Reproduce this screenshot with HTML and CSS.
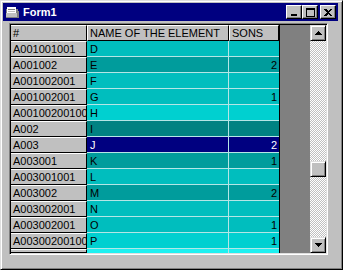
FILE: index.html
```html
<!DOCTYPE html>
<html lang="en">
<head>
<meta charset="UTF-8">
<title>Form1</title>
<link rel="stylesheet" href="styles.css">
</head>
<body>

<!-- the form window -->
<div class="window">

  <!-- caption bar -->
  <div class="titlebar">
    <svg class="appicon" width="16" height="16" viewBox="0 0 16 16" shape-rendering="crispEdges">
      <rect x="1" y="5" width="12" height="9" fill="#808080"/>
      <rect x="2" y="3" width="9" height="9" fill="#ffffff"/>
      <rect x="3" y="5" width="7" height="1" fill="#808080"/>
      <rect x="3" y="7" width="7" height="1" fill="#c0c0c0"/>
      <rect x="1" y="9" width="13" height="5" fill="#c0c0c0"/>
      <rect x="1" y="13" width="13" height="1" fill="#808080"/>
      <rect x="12" y="7" width="2" height="7" fill="#808080"/>
    </svg>
    <span class="title">Form1</span>
    <div class="capbuttons">
      <span class="capbtn">
        <svg width="8" height="7" viewBox="0 0 8 7" shape-rendering="crispEdges"><rect x="1" y="5" width="6" height="2" fill="#000"/></svg>
      </span>
      <span class="capbtn">
        <svg width="9" height="9" viewBox="0 0 9 9" shape-rendering="crispEdges"><path d="M0 0h9v9h-9z M1 2v6h7v-6z" fill="#000" fill-rule="evenodd"/></svg>
      </span>
      <span class="capbtn close">
        <svg width="8" height="7" viewBox="0 0 8 7" shape-rendering="crispEdges"><path d="M0 0h2l2 2 2-2h2l-3 3.5 3 3.5h-2l-2-2-2 2h-2l3-3.5z" fill="#000"/></svg>
      </span>
    </div>
  </div>

  <!-- client area with the flex grid -->
  <div class="client">
    <div class="flexgrid">

      <div class="cells">
        <div class="row head">
          <div class="c fix">#</div>
          <div class="c name">NAME OF THE ELEMENT</div>
          <div class="c sons">SONS</div>
        </div>
        <div class="row lv3"><div class="c fix">A001001001</div><div class="c name">D</div><div class="c sons"></div></div>
        <div class="row lv2"><div class="c fix">A001002</div><div class="c name">E</div><div class="c sons">2</div></div>
        <div class="row lv3"><div class="c fix">A001002001</div><div class="c name">F</div><div class="c sons"></div></div>
        <div class="row lv3"><div class="c fix">A001002001</div><div class="c name">G</div><div class="c sons">1</div></div>
        <div class="row lv4"><div class="c fix">A001002001001</div><div class="c name">H</div><div class="c sons"></div></div>
        <div class="row lv1"><div class="c fix">A002</div><div class="c name">I</div><div class="c sons"></div></div>
        <div class="row sel"><div class="c fix">A003</div><div class="c name">J</div><div class="c sons">2</div></div>
        <div class="row lv2"><div class="c fix">A003001</div><div class="c name">K</div><div class="c sons">1</div></div>
        <div class="row lv3"><div class="c fix">A003001001</div><div class="c name">L</div><div class="c sons"></div></div>
        <div class="row lv2"><div class="c fix">A003002</div><div class="c name">M</div><div class="c sons">2</div></div>
        <div class="row lv3"><div class="c fix">A003002001</div><div class="c name">N</div><div class="c sons"></div></div>
        <div class="row lv3"><div class="c fix">A003002001</div><div class="c name">O</div><div class="c sons">1</div></div>
        <div class="row lv4"><div class="c fix">A003002001001</div><div class="c name">P</div><div class="c sons">1</div></div>
        <div class="row lv5 part"><div class="c fix"></div><div class="c name"></div><div class="c sons"></div></div>
      </div>

      <!-- empty grid background right of the last column -->
      <div class="bkg"></div>

      <!-- vertical scroll bar -->
      <div class="vscroll">
        <div class="sbtn">
          <svg width="7" height="4" viewBox="0 0 7 4" shape-rendering="crispEdges"><path d="M3 0h1v1h1v1h1v1h1v1h-7v-1h1v-1h1v-1h1z" fill="#000"/></svg>
        </div>
        <div class="track"><div class="thumb"></div></div>
        <div class="sbtn">
          <svg width="7" height="4" viewBox="0 0 7 4" shape-rendering="crispEdges"><path d="M0 0h7v1h-1v1h-1v1h-1v1h-1v-1h-1v-1h-1v-1h-1z" fill="#000"/></svg>
        </div>
      </div>

    </div>
  </div>

</div>

</body>
</html>
```

FILE: styles.css
```css
/* page */
body
{
  margin: 0;
  font-family: "Liberation Sans", Arial, sans-serif;
  font-size: 11px;
}

/* window frame, win95 style */
.window
{
  width: 343px;
  height: 270px;
  box-sizing: border-box;
  background: #c0c0c0;
  border: 1px solid;
  border-color: #dfdfdf #000 #000 #dfdfdf;
  box-shadow: inset 1px 1px #fff, inset -1px -1px #808080;
  padding: 2px 4px 3px 2px;
}

/* caption bar */
.titlebar
{
  height: 18px;
  background: #000080;
  display: flex;
  align-items: center;
  padding-left: 2px;
  color: #fff;
}

.appicon
{
  display: block;
}

.title
{
  margin-left: 2px;
  font-weight: bold;
  font-size: 11px;
}

.capbuttons
{
  margin-left: auto;
  margin-right: 2px;
  display: flex;
}

/* caption buttons */
.capbtn
{
  width: 16px;
  height: 14px;
  box-sizing: border-box;
  background: #c0c0c0;
  border: 1px solid;
  border-color: #fff #000 #000 #fff;
  box-shadow: inset -1px -1px #808080;
  display: flex;
  align-items: center;
  justify-content: center;
}

.capbtn svg
{
  display: block;
}

.capbtn.close
{
  margin-left: 2px;
}

/* area below caption */
.client
{
  padding: 2px 0 0 6px;
}

/* grid control, sunken border */
.flexgrid
{
  width: 319px;
  height: 232px;
  box-sizing: border-box;
  border: 1px solid;
  border-color: #808080 #fff #fff #808080;
  box-shadow: inset 1px 1px #000, inset -1px -1px #dfdfdf;
  padding: 1px;
  display: flex;
}

.cells
{
  width: 268px;
  overflow: hidden;
}

/* one grid row */
.row
{
  display: flex;
  height: 16px;
}

.row.part
{
  height: 4px;
}

.c
{
  box-sizing: border-box;
  height: 100%;
  line-height: 14px;
  white-space: nowrap;
  overflow: hidden;
  color: #000;
}

/* fixed first column */
.fix
{
  width: 76px;
  background: #c0c0c0;
  border-top: 1px solid #fff;
  border-bottom: 1px solid #000;
  border-right: 1px solid #000;
  padding-left: 2px;
}

.name
{
  width: 142px;
  border-bottom: 1px solid #b4e6e6;
  border-right: 1px solid #b4e6e6;
  padding: 1px 0 0 3px;
}

.sons
{
  width: 50px;
  border-bottom: 1px solid #b4e6e6;
  padding: 1px 2px 0 0;
  text-align: right;
}

/* header row */
.head .c
{
  background: #c0c0c0;
  border-top: 1px solid #fff;
  border-bottom: 1px solid #000;
  border-right: 1px solid #000;
  padding-top: 0;
}

.head .name,
.head .sons
{
  border-left: 1px solid #fff;
  padding-left: 2px;
  text-align: left;
}

/* row colours by level of the code */
.lv1 .name, .lv1 .sons { background: #008282; }
.lv2 .name, .lv2 .sons { background: #009c9c; }
.lv3 .name, .lv3 .sons { background: #00bebe; }
.lv4 .name, .lv4 .sons { background: #00d0d0; }
.lv5 .name, .lv5 .sons { background: #1ef0f0; border-bottom: 0; }

/* selected row */
.sel .name, .sel .sons
{
  background: #000080;
  color: #fff;
}

/* empty grid area */
.bkg
{
  width: 31px;
  box-sizing: border-box;
  background: #808080;
  border-left: 1px solid #000;
}

/* scroll bar */
.vscroll
{
  width: 16px;
  display: flex;
  flex-direction: column;
  background-color: #c0c0c0;
  background-image: conic-gradient(#fff 25%, #c0c0c0 0 50%, #fff 0 75%, #c0c0c0 0);
  background-size: 2px 2px;
}

.sbtn, .thumb
{
  width: 16px;
  height: 16px;
  box-sizing: border-box;
  background: #c0c0c0;
  border: 1px solid;
  border-color: #dfdfdf #000 #000 #dfdfdf;
  box-shadow: inset 1px 1px #fff, inset -1px -1px #808080;
  display: flex;
  align-items: center;
  justify-content: center;
}

.sbtn svg
{
  display: block;
}

.track
{
  flex: 1;
}

.thumb
{
  margin-top: 120px;
}
```
